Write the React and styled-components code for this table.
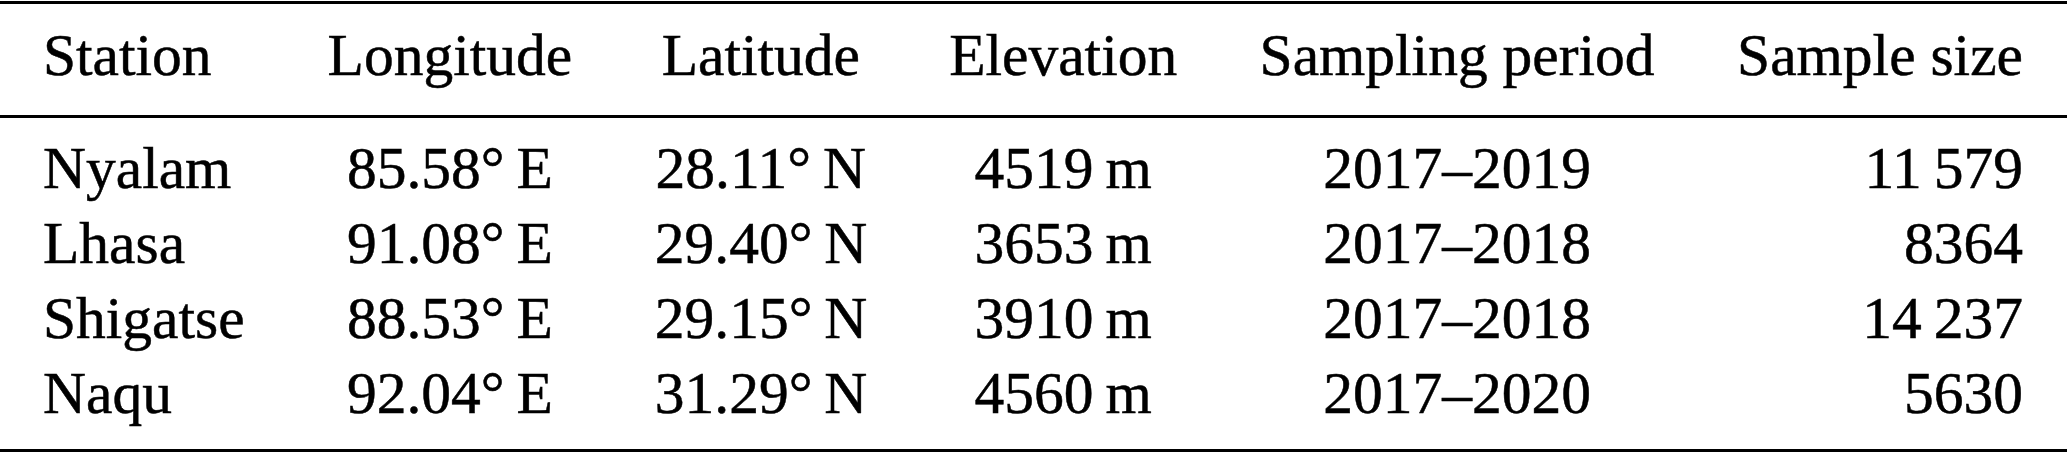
import React from 'react';
import styled, { createGlobalStyle } from 'styled-components';

const Global = createGlobalStyle`
  html, body { margin: 0; padding: 0; background: #fff; }
  body { font-family: "Liberation Serif", "Times New Roman", serif; color: #000; }
`;

const Page = styled.div`
  width: 2067px;
  height: 454px;
  padding-top: 1px;
  box-sizing: border-box;
  background: #fff;
`;

const Rule = styled.div`
  height: ${(p) => p.$h}px;
  background: #000;
`;

const Section = styled.div`
  display: grid;
  grid-template-columns: 202px 245px 212px 228px 395px 286px;
  column-gap: 82.4px;
  padding: ${(p) => p.$top}px 0 ${(p) => p.$bottom}px 43px;
  font-size: 59.5px;
  line-height: 75px;
  -webkit-text-stroke: 0.5px #000;
`;

const Cell = styled.div`
  text-align: ${(p) => p.$align || 'center'};
  white-space: nowrap;
`;

const aligns = ['left', 'center', 'center', 'center', 'center', 'right'];

const header = ['Station', 'Longitude', 'Latitude', 'Elevation', 'Sampling period', 'Sample size'];

const rows = [
  ['Nyalam', '85.58°\u2009E', '28.11°\u2009N', '4519\u2009m', '2017–2019', '11\u2009579'],
  ['Lhasa', '91.08°\u2009E', '29.40°\u2009N', '3653\u2009m', '2017–2018', '8364'],
  ['Shigatse', '88.53°\u2009E', '29.15°\u2009N', '3910\u2009m', '2017–2018', '14\u2009237'],
  ['Naqu', '92.04°\u2009E', '31.29°\u2009N', '4560\u2009m', '2017–2020', '5630'],
];

export default function App() {
  return (
    <Page>
      <Global />
      <Rule $h={3} />
      <Section $top={14} $bottom={22}>
        {header.map((h, i) => (
          <Cell key={h} $align={aligns[i]}>{h}</Cell>
        ))}
      </Section>
      <Rule $h={3} />
      <Section $top={13} $bottom={18}>
        {rows.map((r) =>
          r.map((c, i) => (
            <Cell key={r[0] + i} $align={aligns[i]}>{c}</Cell>
          ))
        )}
      </Section>
      <Rule $h={3} />
    </Page>
  );
}
